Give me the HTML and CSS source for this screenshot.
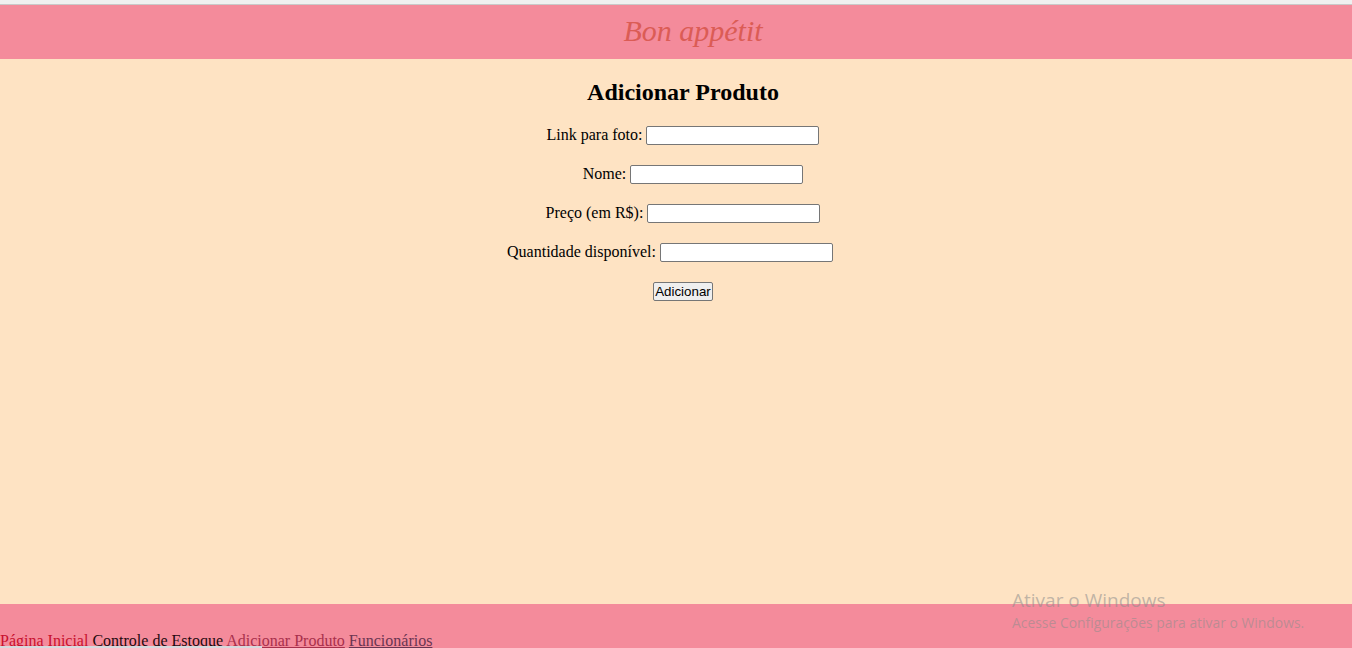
FILE: index.html
```html
<!DOCTYPE html>
<html lang="pt-BR">
<head>
<meta charset="utf-8">
<title>Bon appétit</title>
<link rel="stylesheet" href="styles.css">
</head>
<body>
<div class="page">
  <div class="chrome"></div>
  <header class="site-header">
    <h1 class="brand">Bon appétit</h1>
  </header>
  <main class="content">
    <h2 class="title">Adicionar Produto</h2>
    <form class="form">
      <div class="row"><label>Link para foto:</label><input type="text"></div>
      <div class="row row-nome"><label>Nome:</label><input type="text"></div>
      <div class="row"><label>Preço (em R$):</label><input type="text"></div>
      <div class="row row-qtd"><label>Quantidade disponível:</label><input type="text"></div>
      <div class="row"><button type="button" class="btn">Adicionar</button></div>
    </form>
  </main>
  <footer class="site-footer">
    <nav class="nav">
      <a class="nav-home">Página Inicial</a>
      <span class="nav-stock">Controle de Estoque</span>
      <a class="nav-add">Adicionar Produto</a>
      <a class="nav-staff">Funcionários</a>
    </nav>
  </footer>
  <div class="watermark">
    <div class="wm-title">Ativar o Windows</div>
    <div class="wm-sub">Acesse Configurações para ativar o Windows.</div>
  </div>
  <div class="scrollbar"></div>
</div>
</body>
</html>
```

FILE: styles.css
```css
html, body {
  margin: 0;
  padding: 0;
}
body {
  font-family: "Liberation Serif", "Times New Roman", serif;
  font-size: 16px;
  color: #000;
  background: #fee3c3;
}
.page {
  position: relative;
  height: 648px;
  display: flex;
  flex-direction: column;
  overflow: hidden;
}
.chrome {
  height: 4px;
  background: #f0f0f0;
  border-bottom: 1px solid #c9c9c9;
  flex: none;
}
.site-header {
  flex: none;
  height: 54px;
  background: #f48b9b;
  display: flex;
  align-items: center;
  justify-content: center;
  padding-left: 34px;
}
.brand {
  margin: 0;
  font-weight: normal;
  font-style: italic;
  font-size: 30px;
  line-height: 34px;
  color: #db5c55;
  transform: translateY(-1px);
}
.content {
  flex: 1;
  display: flex;
  flex-direction: column;
  align-items: center;
  padding-left: 14px;
}
.title {
  margin: 19px 0 18px;
  font-size: 24px;
  line-height: 28px;
  font-weight: bold;
}
.form {
  display: flex;
  flex-direction: column;
  align-items: center;
  gap: 17px;
}
.row {
  height: 22px;
  display: flex;
  align-items: center;
  gap: 4px;
  white-space: nowrap;
}
.row-nome { padding-left: 20px; }
.row-qtd { padding-right: 26px; }
.row input {
  box-sizing: border-box;
  width: 173px;
  height: 19px;
  margin: 0;
  border: 1px solid #767676;
  border-radius: 2px;
  background: #fff;
  padding: 1px 2px;
}
.btn {
  box-sizing: border-box;
  height: 19px;
  width: 60px;
  padding: 0;
  margin: 0;
  font-family: "Liberation Sans", Arial, sans-serif;
  font-size: 13.33px;
  line-height: 15px;
  color: #000;
  background: #efefef;
  border: 1px solid #767676;
  border-radius: 2px;
}
.site-footer {
  flex: none;
  height: 44px;
  background: #f48b9b;
  box-sizing: border-box;
  padding-top: 28px;
}
.nav {
  line-height: 18px;
  white-space: nowrap;
}
.nav a, .nav span {
  cursor: pointer;
}
.nav-home { color: #c8102e; }
.nav-stock { color: #1e0a0f; }
.nav-add { color: #a8304c; text-decoration: underline; }
.nav-staff { color: #6a3552; text-decoration: underline; }
.watermark {
  position: absolute;
  left: 1012px;
  top: 588px;
  font-family: "Open Sans", "Noto Sans", sans-serif;
  color: rgba(140, 140, 140, 0.55);
  white-space: nowrap;
}
.wm-title {
  font-size: 19px;
  line-height: 24px;
}
.wm-sub {
  font-size: 13.9px;
  line-height: 20px;
  margin-top: 1px;
}
.scrollbar {
  position: absolute;
  left: 0;
  bottom: 0;
  width: 262px;
  height: 2px;
  background: #d6d9dd;
}
```
